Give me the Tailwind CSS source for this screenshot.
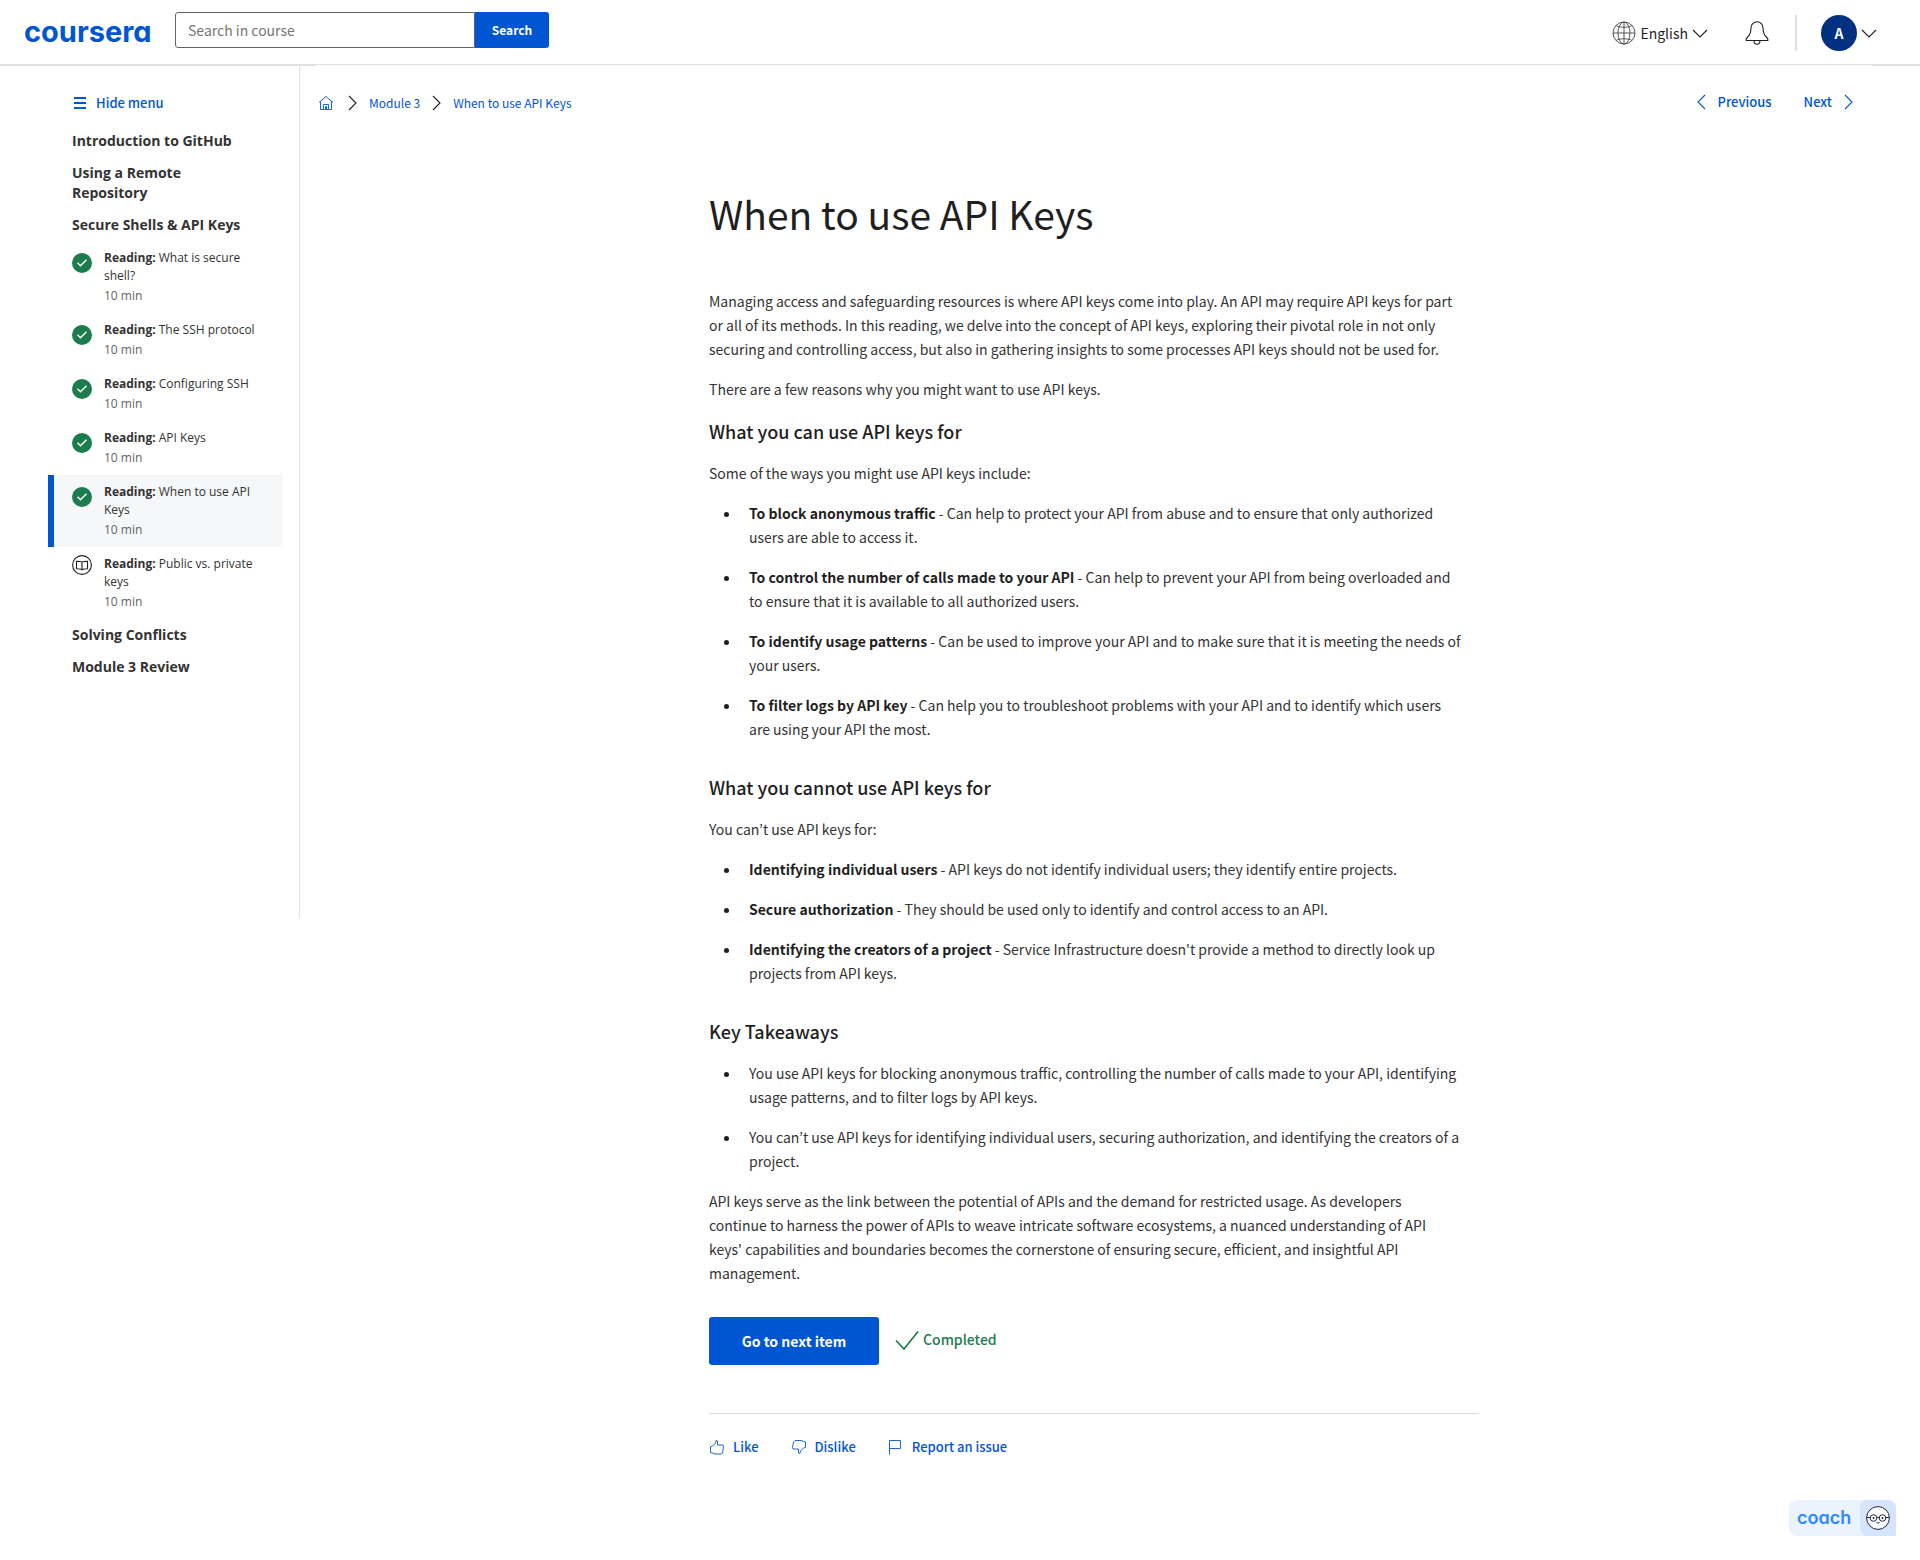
<!DOCTYPE html>
<html lang="en">
<head>
<meta charset="utf-8">
<meta name="viewport" content="width=device-width, initial-scale=1">
<title>When to use API Keys | Coursera</title>
<script src="https://cdn.jsdelivr.net/npm/@tailwindcss/browser@4"></script>
</head>
<body class="min-h-screen bg-white font-['Noto_Sans_CJK_KR',sans-serif] text-sm text-[#1f1f1f]">
<svg class="hidden" aria-hidden="true">
  <symbol id="done" viewBox="0 0 20 20"><circle cx="10" cy="10" r="10" fill="#1d7c4d"/><path d="M5.5 9.7l3 3 6-6" fill="none" stroke="#fff" stroke-width="1.4"/></symbol>
  <symbol id="down" viewBox="0 0 16 9"><path d="M1 1l7 7 7-7" fill="none" stroke="currentColor" stroke-width="1.1"/></symbol>
  <symbol id="right" viewBox="0 0 9 16"><path d="M1 1l7 7-7 7" fill="none" stroke="currentColor" stroke-width="1.1"/></symbol>
</svg>

<header class="flex h-[66px] items-center justify-between border-b-2 border-[#e1e1e1] pr-[43px] pl-6">
  <div class="flex items-center gap-6 pb-1">
    <a href="#" class="w-[127px] pt-1 font-['Inter',sans-serif] text-[29px] leading-8 font-bold text-[#0056d2] [font-feature-settings:'cv11']">coursera</a>
    <form class="flex h-9">
      <input type="text" aria-label="Search in course" placeholder="Search in course" class="w-[300px] rounded-l-[3px] border border-[#636363] px-3 text-sm placeholder:text-[#757575]">
      <button type="button" class="w-[74px] rounded-r-[3px] bg-[#0056d2] text-xs font-bold text-white">Search</button>
    </form>
  </div>
  <div class="flex items-center pt-0.5">
    <button type="button" class="flex items-center gap-1">
      <svg class="size-6" viewBox="0 0 24 24" fill="none" stroke="#555" stroke-width="1"><circle cx="12" cy="12" r="11"/><ellipse cx="12" cy="12" rx="6" ry="11"/><path d="M12 1v22M1 12h22M4 4.500c3 2.300 13 2.300 16 0M4 19.500c3-2.300 13-2.300 16 0"/></svg>
      <span>English</span>
      <svg class="h-[9px] w-4"><use href="#down"/></svg>
    </button>
    <button type="button" aria-label="Notifications" class="ml-[37px]">
      <svg class="size-6" viewBox="0 0 24 24" fill="none" stroke="#1f1f1f" stroke-width="1.100"><path d="M1.200 19.500v-1.700l3-3.600c1.500-2 1.800-3.200 1.800-7.200C6 3.500 8.500.8 12 .8S18 3.500 18 7c0 4 .3 5.200 1.800 7.200l3 3.600v1.700zM9 19.500c0 5 6 5 6 0"/></svg>
    </button>
    <div class="ml-[26px] h-9 w-0.5 bg-[#e1e1e1]"></div>
    <button type="button" aria-label="Account menu" class="ml-6 flex items-center gap-1">
      <span class="flex size-9 items-center justify-center rounded-full bg-[#00307f] font-bold text-white">A</span>
      <svg class="h-[9px] w-4"><use href="#down"/></svg>
    </button>
  </div>
</header>

<div class="flex items-start">
  <aside class="min-h-[852px] w-[300px] shrink-0 border-r border-[#e1e1e1] pt-[27px] pr-4 pl-12 font-['Open_Sans',sans-serif]">
    <button type="button" class="ml-[26px] flex items-center gap-2.5 font-['Noto_Sans_CJK_KR',sans-serif] text-[13px] leading-5 font-medium text-[#0056d2]">
      <svg class="size-3" viewBox="0 0 12 12" fill="currentColor"><path d="M0 0h12v2H0zM0 5h12v2H0zM0 10h12v2H0z"/></svg>
      Hide menu
    </button>
    <nav class="mt-3">
      <h2 class="py-1.5 pr-12 pl-6 text-sm leading-5 font-bold text-[#333]">Introduction to GitHub</h2>
      <h2 class="py-1.5 pr-12 pl-6 text-sm leading-5 font-bold text-[#333]">Using a Remote Repository</h2>
      <h2 class="py-1.5 pr-10 pl-6 text-sm leading-5 font-bold text-[#333]">Secure Shells &amp; API Keys</h2>
      <ul class="text-xs leading-[18px] text-[#333]">
        <li><a href="#" class="flex gap-3 py-2 pr-6 pl-6"><svg class="mt-1 size-5 shrink-0"><use href="#done"/></svg><span><span class="block"><b class="font-bold">Reading:</b> What is secure shell?</span><span class="mt-0.5 block text-[#636363]">10 min</span></span></a></li>
        <li><a href="#" class="flex gap-3 py-2 pr-6 pl-6"><svg class="mt-1 size-5 shrink-0"><use href="#done"/></svg><span><span class="block"><b class="font-bold">Reading:</b> The SSH protocol</span><span class="mt-0.5 block text-[#636363]">10 min</span></span></a></li>
        <li><a href="#" class="flex gap-3 py-2 pr-6 pl-6"><svg class="mt-1 size-5 shrink-0"><use href="#done"/></svg><span><span class="block"><b class="font-bold">Reading:</b> Configuring SSH</span><span class="mt-0.5 block text-[#636363]">10 min</span></span></a></li>
        <li><a href="#" class="flex gap-3 py-2 pr-6 pl-6"><svg class="mt-1 size-5 shrink-0"><use href="#done"/></svg><span><span class="block"><b class="font-bold">Reading:</b> API Keys</span><span class="mt-0.5 block text-[#636363]">10 min</span></span></a></li>
        <li><a href="#" aria-current="page" class="flex gap-3 border-l-[6px] border-[#0056d2] bg-[#f5f7f8] py-2 pr-6 pl-[18px]"><svg class="mt-1 size-5 shrink-0"><use href="#done"/></svg><span><span class="block"><b class="font-bold">Reading:</b> When to use API Keys</span><span class="mt-0.5 block text-[#636363]">10 min</span></span></a></li>
        <li><a href="#" class="flex gap-3 py-2 pr-6 pl-6"><svg class="size-5 shrink-0" viewBox="0 0 20 20" fill="none" stroke="#1f1f1f" stroke-width="1.100"><circle cx="10" cy="10" r="9.400"/><path d="M10 7.200C9 6.200 8 6.200 4.500 6.200v7.600c3.500 0 4.500 0 5.500 1 1-1 2-1 5.500-1V6.200c-3.500 0-4.500 0-5.500 1zv7.600"/></svg><span><span class="block"><b class="font-bold">Reading:</b> Public vs. private keys</span><span class="mt-0.5 block text-[#636363]">10 min</span></span></a></li>
      </ul>
      <h2 class="py-1.5 pr-12 pl-6 text-sm leading-5 font-bold text-[#333]">Solving Conflicts</h2>
      <h2 class="py-1.5 pr-12 pl-6 text-sm leading-5 font-bold text-[#333]">Module 3 Review</h2>
    </nav>
  </aside>

  <main class="-mt-px mr-12 ml-4 min-w-0 flex-1 bg-white pt-[26px]">
    <div class="flex items-center justify-between pr-[19px] pl-0.5 text-xs leading-5 text-[#0056d2]">
      <nav aria-label="Breadcrumb" class="flex items-center pt-0.5">
        <a href="#" aria-label="Home"><svg class="size-4" viewBox="0 0 16 16" fill="none" stroke="currentColor" stroke-width="0.900"><path d="M1 7.500L8 1.500l7 6M2.500 6.500v8h11v-8M5.500 14.500v-5h5v5M7.500 14v-2.500h1V14"/></svg></a>
        <svg class="mx-3 ml-3.5 h-4 w-[9px] text-[#1f1f1f]"><use href="#right"/></svg>
        <a href="#">Module 3</a>
        <svg class="mx-3 h-4 w-[9px] text-[#1f1f1f]"><use href="#right"/></svg>
        <a href="#">When to use API Keys</a>
      </nav>
      <div class="flex items-center gap-8 text-[13px] font-medium">
        <a href="#" class="flex items-center gap-3"><svg class="h-4 w-[9px] rotate-180"><use href="#right"/></svg>Previous</a>
        <a href="#" class="flex items-center gap-3">Next<svg class="h-4 w-[9px]"><use href="#right"/></svg></a>
      </div>
    </div>

    <article class="mx-auto mt-[74px] max-w-[770px] leading-6">
      <h1 class="text-[39px] leading-[52px] font-normal">When to use API Keys</h1>
      <div class="mt-[50px] space-y-4">
        <p class="pr-5 text-[#333]">Managing access and safeguarding resources is where API keys come into play. An API may require API keys for part or all of its methods. In this reading, we delve into the concept of API keys, exploring their pivotal role in not only securing and controlling access, but also in gathering insights to some processes API keys should not be used for.</p>
        <p class="pr-5 text-[#333]">There are a few reasons why you might want to use API keys.</p>
        <h2 class="text-lg leading-7 font-medium">What you can use API keys for</h2>
        <p class="pr-5 text-[#333]">Some of the ways you might use API keys include:</p>
        <ul class="list-disc space-y-4 pr-4 pl-8 text-[#333] marker:text-[#1f1f1f]">
          <li class="pl-2"><strong class="text-[#1f1f1f]">To block anonymous traffic</strong> - Can help to protect your API from abuse and to ensure that only authorized users are able to access it.</li>
          <li class="pl-2"><strong class="text-[#1f1f1f]">To control the number of calls made to your API</strong> - Can help to prevent your API from being overloaded and to ensure that it is available to all authorized users.</li>
          <li class="pl-2"><strong class="text-[#1f1f1f]">To identify usage patterns</strong> - Can be used to improve your API and to make sure that it is meeting the needs of your users.</li>
          <li class="pl-2"><strong class="text-[#1f1f1f]">To filter logs by API key</strong> - Can help you to troubleshoot problems with your API and to identify which users are using your API the most.</li>
        </ul>
      </div>
      <div class="mt-8 space-y-4">
        <h2 class="text-lg leading-7 font-medium">What you cannot use API keys for</h2>
        <p class="pr-5 text-[#333]">You can’t use API keys for:</p>
        <ul class="list-disc space-y-4 pr-4 pl-8 text-[#333] marker:text-[#1f1f1f]">
          <li class="pl-2"><strong class="text-[#1f1f1f]">Identifying individual users</strong> - API keys do not identify individual users; they identify entire projects.</li>
          <li class="pl-2"><strong class="text-[#1f1f1f]">Secure authorization</strong> - They should be used only to identify and control access to an API.</li>
          <li class="pl-2"><strong class="text-[#1f1f1f]">Identifying the creators of a project</strong> - Service Infrastructure doesn't provide a method to directly look up projects from API keys.</li>
        </ul>
      </div>
      <div class="mt-8 space-y-4">
        <h2 class="text-lg leading-7 font-medium">Key Takeaways</h2>
        <ul class="list-disc space-y-4 pr-4 pl-8 text-[#333] marker:text-[#1f1f1f]">
          <li class="pl-2">You use API keys for blocking anonymous traffic, controlling the number of calls made to your API, identifying usage patterns, and to filter logs by API keys.</li>
          <li class="pl-2">You can’t use API keys for identifying individual users, securing authorization, and identifying the creators of a project.</li>
        </ul>
        <p class="pr-5 text-[#333]">API keys serve as the link between the potential of APIs and the demand for restricted usage. As developers continue to harness the power of APIs to weave intricate software ecosystems, a nuanced understanding of API keys' capabilities and boundaries becomes the cornerstone of ensuring secure, efficient, and insightful API management.</p>
      </div>
      <div class="mt-8 flex items-center gap-4">
        <button type="button" class="h-12 w-[170px] rounded-[3px] bg-[#0056d2] font-bold text-white">Go to next item</button>
        <p class="flex items-center gap-1 pb-1 font-medium text-[#1d7c4d]"><svg class="size-6" viewBox="0 0 24 24" fill="none" stroke="currentColor" stroke-width="1.700"><path d="M1 13.500l8 8.500L23 4.500"/></svg>Completed</p>
      </div>
      <div class="mt-12 flex gap-8 border-t border-[#dadce0] pt-[23px] text-[13px] leading-5 font-medium text-[#0056d2]">
        <button type="button" class="flex items-center gap-2"><svg class="size-4" viewBox="0 0 16 16" fill="none" stroke="currentColor" stroke-width="0.900"><path d="M1.500 7.500l2-.500L6.500 4l.5-2.500L8.500 2v4H14l.500 1.500L13.500 14l-1.500 1H6L3.500 14l-2-.500z"/></svg>Like</button>
        <button type="button" class="flex items-center gap-2"><svg class="size-4" viewBox="0 0 16 16" fill="none" stroke="currentColor" stroke-width="0.900"><path d="M14.500 8.500l-2 .500L9.500 12l-.5 2.500L7.500 14v-4H2l-.500-1.500L2.500 3 4 1.500h6l2.500 1 2 .500z"/></svg>Dislike</button>
        <button type="button" class="flex items-center gap-2"><svg class="size-4" viewBox="0 0 16 16" fill="none" stroke="currentColor" stroke-width="0.900"><path d="M1.500 15.500v-14h11v8h-11"/></svg>Report an issue</button>
      </div>
    </article>
  </main>
</div>

<button type="button" class="fixed right-6 bottom-6 flex h-9 items-center rounded-lg rounded-br-none bg-[#ebf3ff] pl-2">
  <span class="w-[63px] text-left font-['Inter',sans-serif] text-lg leading-9 font-semibold text-[#2d89ff] [font-feature-settings:'cv11']">coach</span>
  <span class="flex size-9 items-center justify-center rounded-lg rounded-br-none bg-[#d5e5ff]">
    <svg class="size-6" viewBox="0 0 24 24" fill="none" stroke="#1f2540"><circle cx="12" cy="12" r="11.400" fill="#fff"/><circle cx="7.500" cy="12" r="3.300"/><circle cx="16.500" cy="12" r="3.300"/><path d="M1 11.500h3.200M19.800 11.500H23M10.800 11.500h2.400M10.500 16.500q1.500 1.200 3 0"/><path d="M7.500 11v2M16.500 11v2" stroke-width="1.400"/></svg>
  </span>
</button>
</body>
</html>
